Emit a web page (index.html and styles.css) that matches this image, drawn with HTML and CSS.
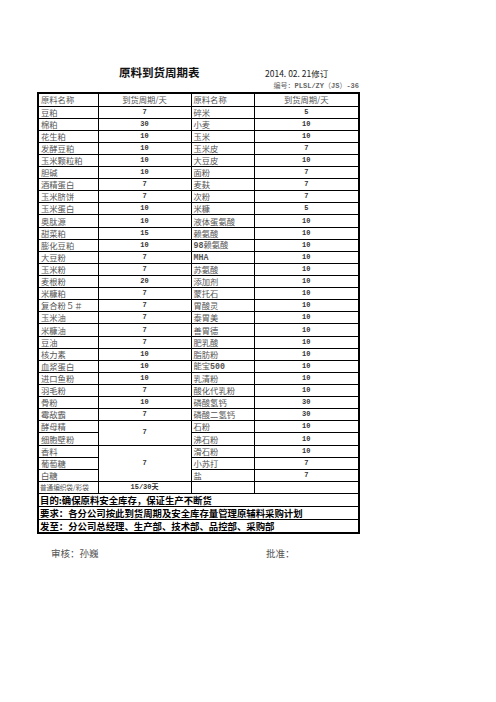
FILE: index.html
```html
<!DOCTYPE html>
<html lang="zh">
<head>
<meta charset="utf-8">
<link rel="stylesheet" href="styles.css">
</head>
<body>
<div class="page">
  <div class="head">
    <div class="head-row">
      <h1 class="title">原料到货周期表</h1>
      <span class="date">2014. 02. 21修订</span>
    </div>
    <div class="code">编号：<span class="mono">PLSL/ZY</span>（<span class="mono">JS</span>）<span class="mono">-36</span></div>
  </div>
  <table class="sheet">
    <colgroup><col class="c1"><col class="c2"><col class="c3"><col class="c4"></colgroup>
    <tr class="hdr"><td>原料名称</td><td class="ctr">到货周期/天</td><td>原料名称</td><td class="ctr">到货周期/天</td></tr>
    <tr><td>豆粕</td><td class="num">7</td><td>碎米</td><td class="num">5</td></tr>
    <tr><td>棉粕</td><td class="num">30</td><td>小麦</td><td class="num">10</td></tr>
    <tr><td>花生粕</td><td class="num">10</td><td>玉米</td><td class="num">10</td></tr>
    <tr><td>发酵豆粕</td><td class="num">10</td><td>玉米皮</td><td class="num">7</td></tr>
    <tr><td>玉米颗粒粕</td><td class="num">10</td><td>大豆皮</td><td class="num">10</td></tr>
    <tr><td>胆碱</td><td class="num">10</td><td>面粉</td><td class="num">7</td></tr>
    <tr><td>酒精蛋白</td><td class="num">7</td><td>麦麸</td><td class="num">7</td></tr>
    <tr><td>玉米脐饼</td><td class="num">7</td><td>次粉</td><td class="num">7</td></tr>
    <tr><td>玉米蛋白</td><td class="num">10</td><td>米糠</td><td class="num">5</td></tr>
    <tr><td>奥肽源</td><td class="num">10</td><td>液体蛋氨酸</td><td class="num">10</td></tr>
    <tr><td>甜菜粕</td><td class="num">15</td><td>赖氨酸</td><td class="num">10</td></tr>
    <tr><td>膨化豆粕</td><td class="num">10</td><td><span class="mono">98</span>赖氨酸</td><td class="num">10</td></tr>
    <tr><td>大豆粉</td><td class="num">7</td><td><span class="mono">MHA</span></td><td class="num">10</td></tr>
    <tr><td>玉米粉</td><td class="num">7</td><td>苏氨酸</td><td class="num">10</td></tr>
    <tr><td>麦根粉</td><td class="num">20</td><td>添加剂</td><td class="num">10</td></tr>
    <tr><td>米糠粕</td><td class="num">7</td><td>蒙托石</td><td class="num">10</td></tr>
    <tr><td>复合粉５＃</td><td class="num">7</td><td>胃酸灵</td><td class="num">10</td></tr>
    <tr><td>玉米油</td><td class="num">7</td><td>泰胃美</td><td class="num">10</td></tr>
    <tr><td>米糠油</td><td class="num">7</td><td>善胃德</td><td class="num">10</td></tr>
    <tr><td>豆油</td><td class="num">7</td><td>肥乳酸</td><td class="num">10</td></tr>
    <tr><td>核力素</td><td class="num">10</td><td>脂肪粉</td><td class="num">10</td></tr>
    <tr><td>血浆蛋白</td><td class="num">10</td><td>能宝<span class="mono">500</span></td><td class="num">10</td></tr>
    <tr><td>进口鱼粉</td><td class="num">10</td><td>乳清粉</td><td class="num">10</td></tr>
    <tr><td>羽毛粉</td><td class="num">7</td><td>酸化代乳粉</td><td class="num">10</td></tr>
    <tr><td>骨粉</td><td class="num">10</td><td>磷酸氢钙</td><td class="num">30</td></tr>
    <tr><td>霉敌霸</td><td class="num">7</td><td>磷酸二氢钙</td><td class="num">30</td></tr>
    <tr><td>酵母精</td><td class="num" rowspan="2">7</td><td>石粉</td><td class="num">10</td></tr>
    <tr><td>细胞壁粉</td><td>沸石粉</td><td class="num">10</td></tr>
    <tr><td>香料</td><td class="num" rowspan="3">7</td><td>滑石粉</td><td class="num">10</td></tr>
    <tr><td>葡萄糖</td><td>小苏打</td><td class="num">7</td></tr>
    <tr><td>白糖</td><td>盐</td><td class="num">7</td></tr>
    <tr><td class="small">普通编织袋/彩袋</td><td class="num"><span class="mono">15/30</span>天</td><td></td><td></td></tr>
    <tr class="note"><td colspan="4">目的:确保原料安全库存，保证生产不断货</td></tr>
    <tr class="note"><td colspan="4">要求：各分公司按此到货周期及安全库存量管理原辅料采购计划</td></tr>
    <tr class="note"><td colspan="4">发至：分公司总经理、生产部、技术部、品控部、采购部</td></tr>
  </table>
  <div class="sign">
    <span class="sign-a">审核：孙巍</span>
    <span class="sign-b">批准：</span>
  </div>
</div>
</body>
</html>
```
FILE: styles.css
```css
html, body {
  margin: 0;
  padding: 0;
  background: #fff;
}
.page {
  width: 321px;
  margin-left: 37px;
  padding-top: 64px;
  font-family: "Noto Sans CJK SC", "DejaVu Sans", sans-serif;
}
.head {
  display: flex;
  flex-direction: column;
}
.head-row {
  display: flex;
  align-items: baseline;
  height: 16px;
}
.title {
  margin: 0 0 0 82px;
  font-size: 11.5px;
  font-weight: bold;
  line-height: 16px;
  color: #111;
  width: 146px;
}
.date {
  font-size: 8.5px;
  color: #222;
  line-height: 16px;
}
.code {
  align-self: flex-end;
  font-size: 7px;
  color: #666;
  line-height: 11px;
  height: 12px;
  margin-right: -1px;
}
.mono {
  font-family: "Liberation Mono", "DejaVu Sans Mono", monospace;
  font-weight: bold;
  line-height: 8px;
  vertical-align: baseline;
}
.sheet {
  width: 321px;
  border-collapse: collapse;
  border: 2px solid #000;
  table-layout: fixed;
}
.c1 { width: 60px; }
.c2 { width: 93px; }
.c3 { width: 63px; }
.c4 { width: 105px; }
.sheet tr {
  height: 12.12px;
}
.sheet td {
  border: 1px solid #000;
  height: auto;
  padding: 0 0 0 2px;
  font-size: 8.3px;
  line-height: 9px;
  color: #555;
  white-space: nowrap;
  overflow: hidden;
  vertical-align: middle;
}
.sheet tr.hdr {
  height: 13px;
}
.sheet td.ctr {
  text-align: center;
  padding: 0;
}
.sheet td.num {
  text-align: center;
  padding: 0;
  font-family: "Liberation Mono", "Noto Sans CJK SC", monospace;
  font-weight: bold;
  font-size: 7px;
  color: #333;
}
.sheet td.small {
  font-size: 6.6px;
  padding-left: 1px;
}
.sheet tr.note {
  height: 13px;
}
.sheet .note td {
  font-size: 9.4px;
  font-weight: bold;
  color: #000;
  padding-left: 1px;
  line-height: 12px;
}
.sign {
  display: flex;
  padding-top: 12px;
  font-size: 9.5px;
  color: #555;
}
.sign-a {
  margin-left: 14px;
  width: 215px;
}
```
